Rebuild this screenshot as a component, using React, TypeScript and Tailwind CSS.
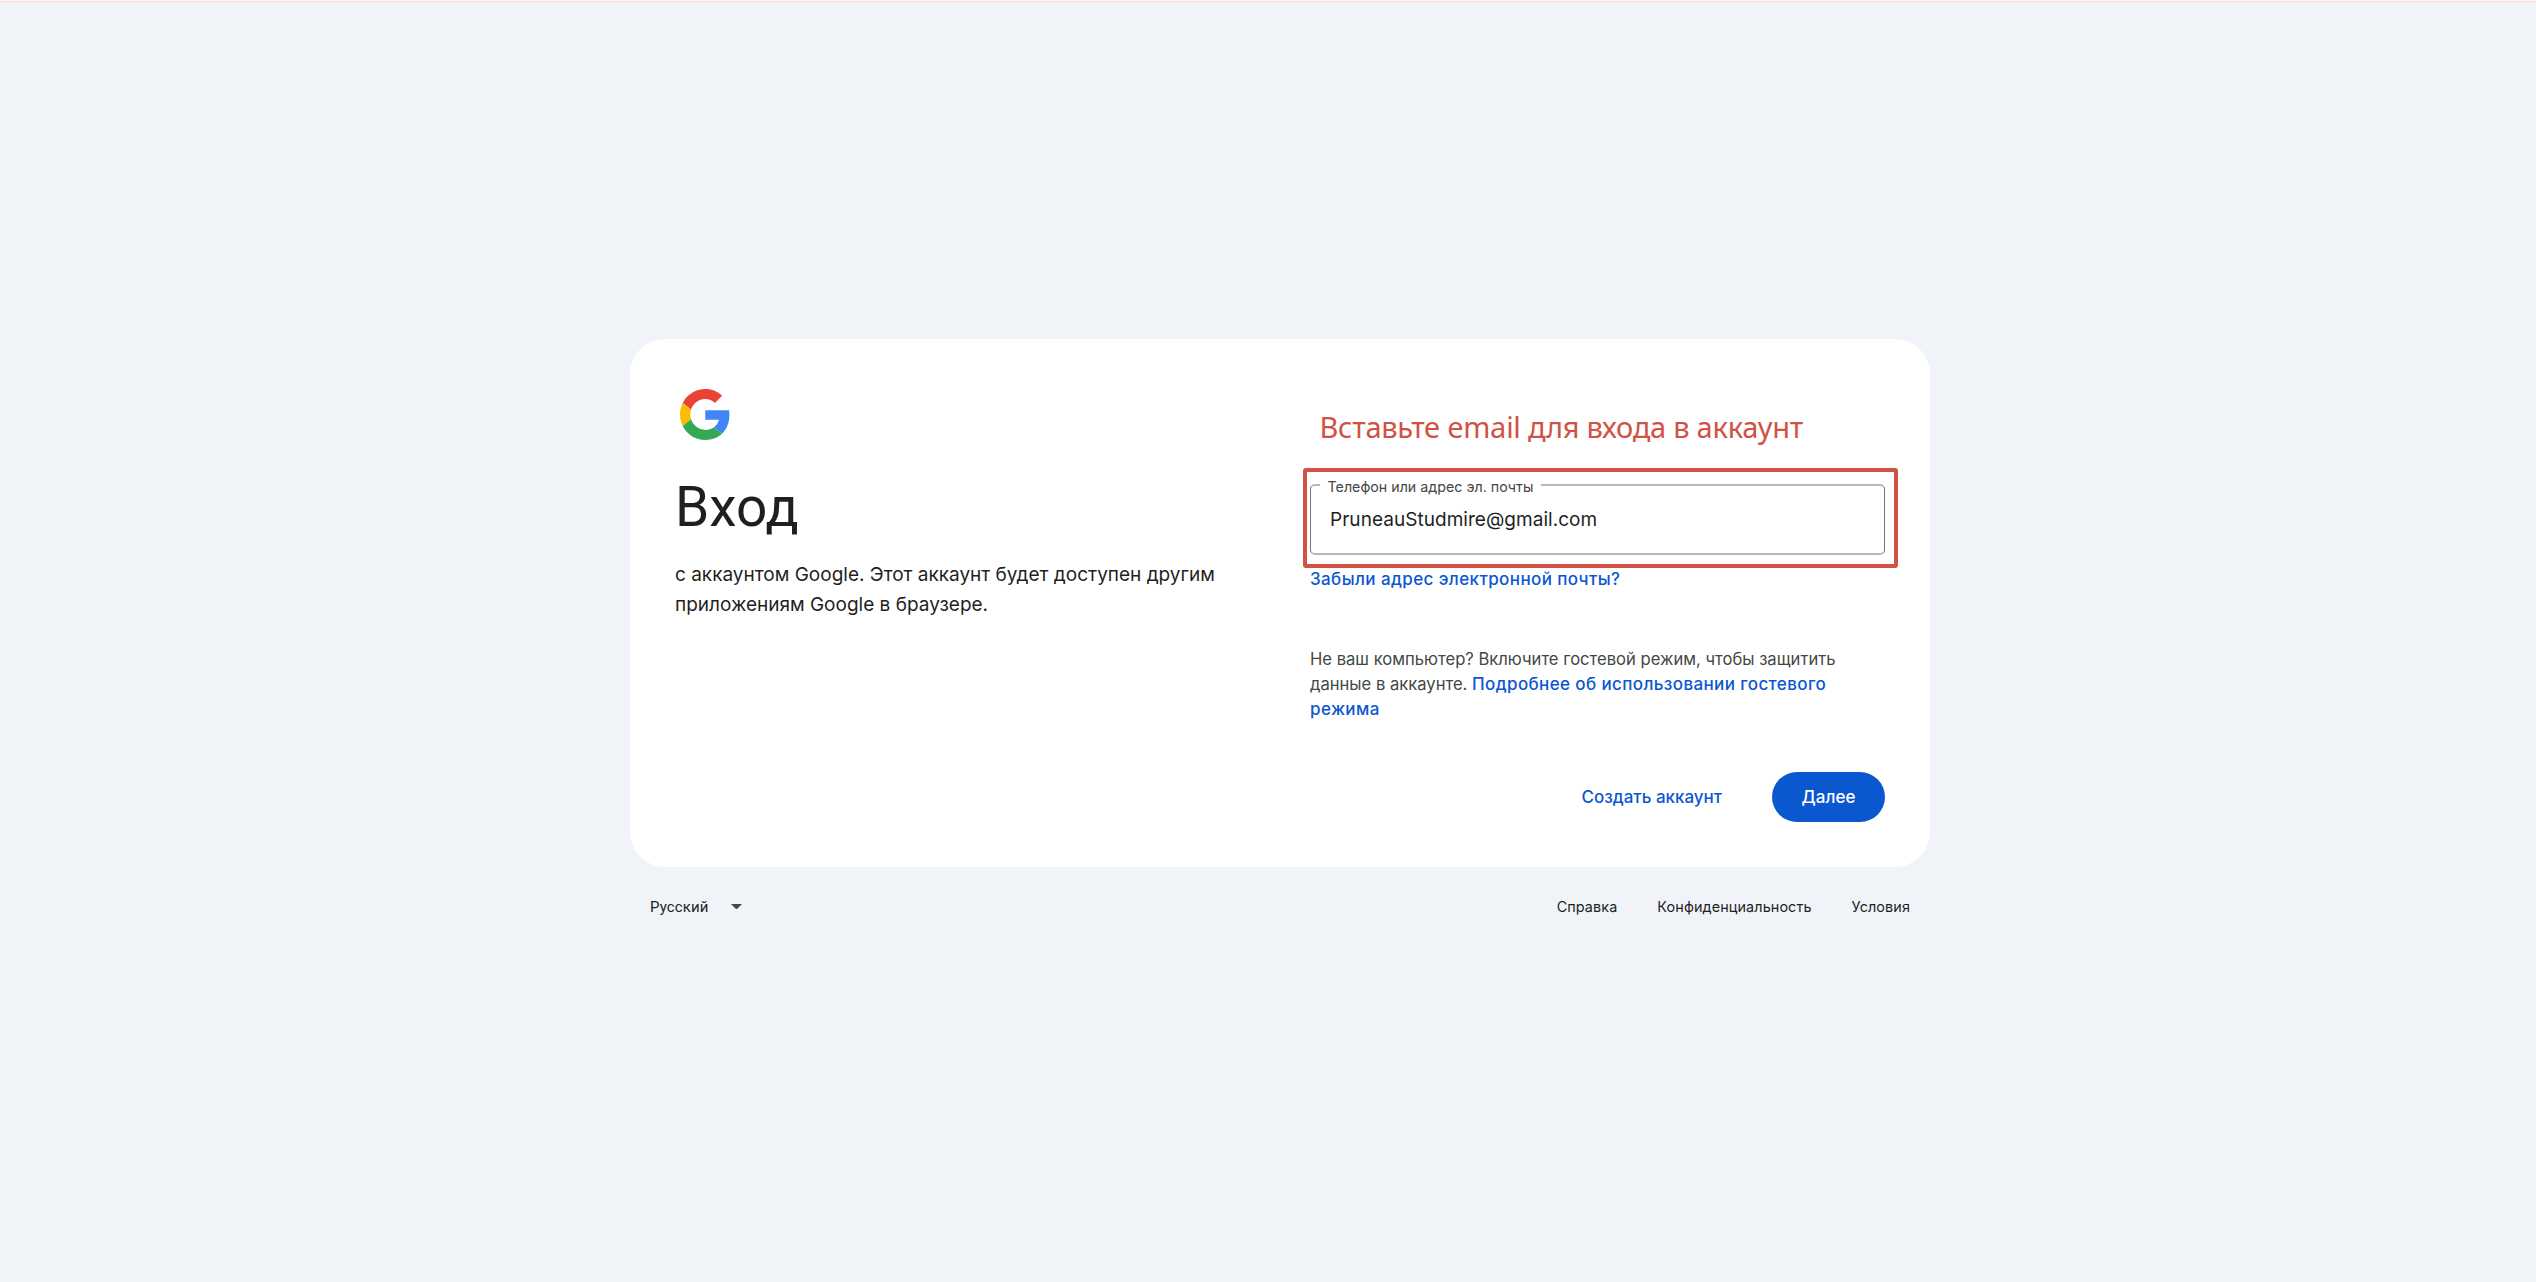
const footerLinks = ['Справка', 'Конфиденциальность', 'Условия'];

function GoogleLogo() {
  return (
    <svg viewBox="0 0 48 48" className="ml-[5px] mt-[5px] h-[51px] w-[50.5px]" preserveAspectRatio="none">
      <path fill="#EA4335" d="M24 9.5c3.54 0 6.71 1.22 9.21 3.6l6.85-6.85C35.9 2.38 30.47 0 24 0 14.62 0 6.51 5.38 2.56 13.22l7.98 6.19C12.43 13.72 17.74 9.5 24 9.5z" />
      <path fill="#4285F4" d="M46.98 24.55c0-1.57-.15-3.09-.38-4.55H24v9.02h12.94c-.58 2.96-2.26 5.48-4.78 7.18l7.73 6c4.51-4.18 7.09-10.36 7.09-17.65z" />
      <path fill="#FBBC05" d="M10.53 28.59c-.48-1.45-.76-2.99-.76-4.59s.27-3.14.76-4.59l-7.98-6.19C.92 16.46 0 20.12 0 24c0 3.88.92 7.54 2.56 10.78l7.97-6.19z" />
      <path fill="#34A853" d="M24 48c6.48 0 11.93-2.13 15.89-5.81l-7.73-6c-2.15 1.45-4.92 2.3-8.16 2.3-6.26 0-11.57-4.22-13.47-9.91l-7.98 6.19C6.51 42.62 14.62 48 24 48z" />
    </svg>
  );
}

function EmailField() {
  return (
    <div className="-mr-[13px] -ml-[7px] mt-[21px] h-[100px] rounded-[3px] border-4 border-[#d05244] pt-3 pr-[9px] pl-[3px]">
      <div className="relative h-[71px] rounded-[5px] border-x border-y-2 border-x-[#747775] border-y-[#b6b7b6] pt-[19px] pl-[19px]">
        <label className="absolute -top-[9.5px] left-[9px] w-[221px] bg-white pl-[7.5px] text-[14.25px] leading-5 whitespace-nowrap text-[#444746]">
          Телефон или адрес эл. почты
        </label>
        <div className="text-[19px] leading-[30px] tracking-[0.04px] text-[#1f1f1f]">PruneauStudmire@gmail.com</div>
      </div>
    </div>
  );
}

export default function App() {
  return (
    <div className="flex h-[1282px] w-[2536px] flex-col overflow-hidden bg-[#f0f4f9] font-['Inter',sans-serif] text-[#1f1f1f]">
      <div className="h-[3px] border-t border-[#fdf5f3] bg-[#f8e6e4]" />

      <div className="mt-[336px] ml-[630px] w-[1300px]">
        <main className="flex h-[528px] justify-between rounded-[35px] bg-white p-[45px]">
          <section className="w-[575px]">
            <div className="flex h-[60px] w-[60px]">
              <GoogleLogo />
            </div>
            <h1 className="mt-[31px] font-['Roboto',sans-serif] text-[55px] leading-[65px] font-normal">Вход</h1>
            <p className="mt-[19.5px] text-[19px] leading-[30px]">
              с аккаунтом Google. Этот аккаунт будет доступен другим
              <br />
              приложениям Google в браузере.
            </p>
          </section>

          <section className="w-[575px] pt-[23px]">
            <p className="pl-[9.5px] font-['Noto_Sans',sans-serif] text-[29px] leading-[40px] tracking-[-0.25px] text-[#d05244]">
              Вставьте email для входа в аккаунт
            </p>
            <EmailField />
            <a className="-mt-px block text-[17px] leading-[25px] font-medium tracking-[0.4px] text-[#0b57d0]">
              Забыли адрес электронной почты?
            </a>
            <p className="mt-[55px] text-[16.6px] leading-[25px] text-[#444746]">
              Не ваш компьютер? Включите гостевой режим, чтобы защитить
              <br />
              данные в аккаунте.{' '}
              <a className="text-[17px] font-medium tracking-[0.38px] text-[#0b57d0]">
                Подробнее об использовании гостевого
                <br />
                режима
              </a>
            </p>
            <div className="mt-[50px] flex items-center justify-end gap-[50px] text-[17px] font-medium">
              <button className="pt-[2px] text-[#0b57d0]">Создать аккаунт</button>
              <button className="h-[50px] w-[113px] rounded-full bg-[#0b57d0] pt-[2px] text-white">Далее</button>
            </div>
          </section>
        </main>

        <footer className="mt-[29.5px] flex justify-between px-5 text-[14.4px] leading-5">
          <div className="flex items-center">
            <span className="font-['Roboto',sans-serif] text-[15px] tracking-[0.1px]">Русский</span>
            <svg viewBox="0 0 10 5" className="ml-[22.5px] h-[5.5px] w-[11px] fill-[#444746]">
              <path d="M0 0h10L5 5z" />
            </svg>
          </div>
          <div className="flex gap-10 tracking-[0.1px]">
            {footerLinks.map((link) => (
              <a key={link}>{link}</a>
            ))}
          </div>
        </footer>
      </div>
    </div>
  );
}
